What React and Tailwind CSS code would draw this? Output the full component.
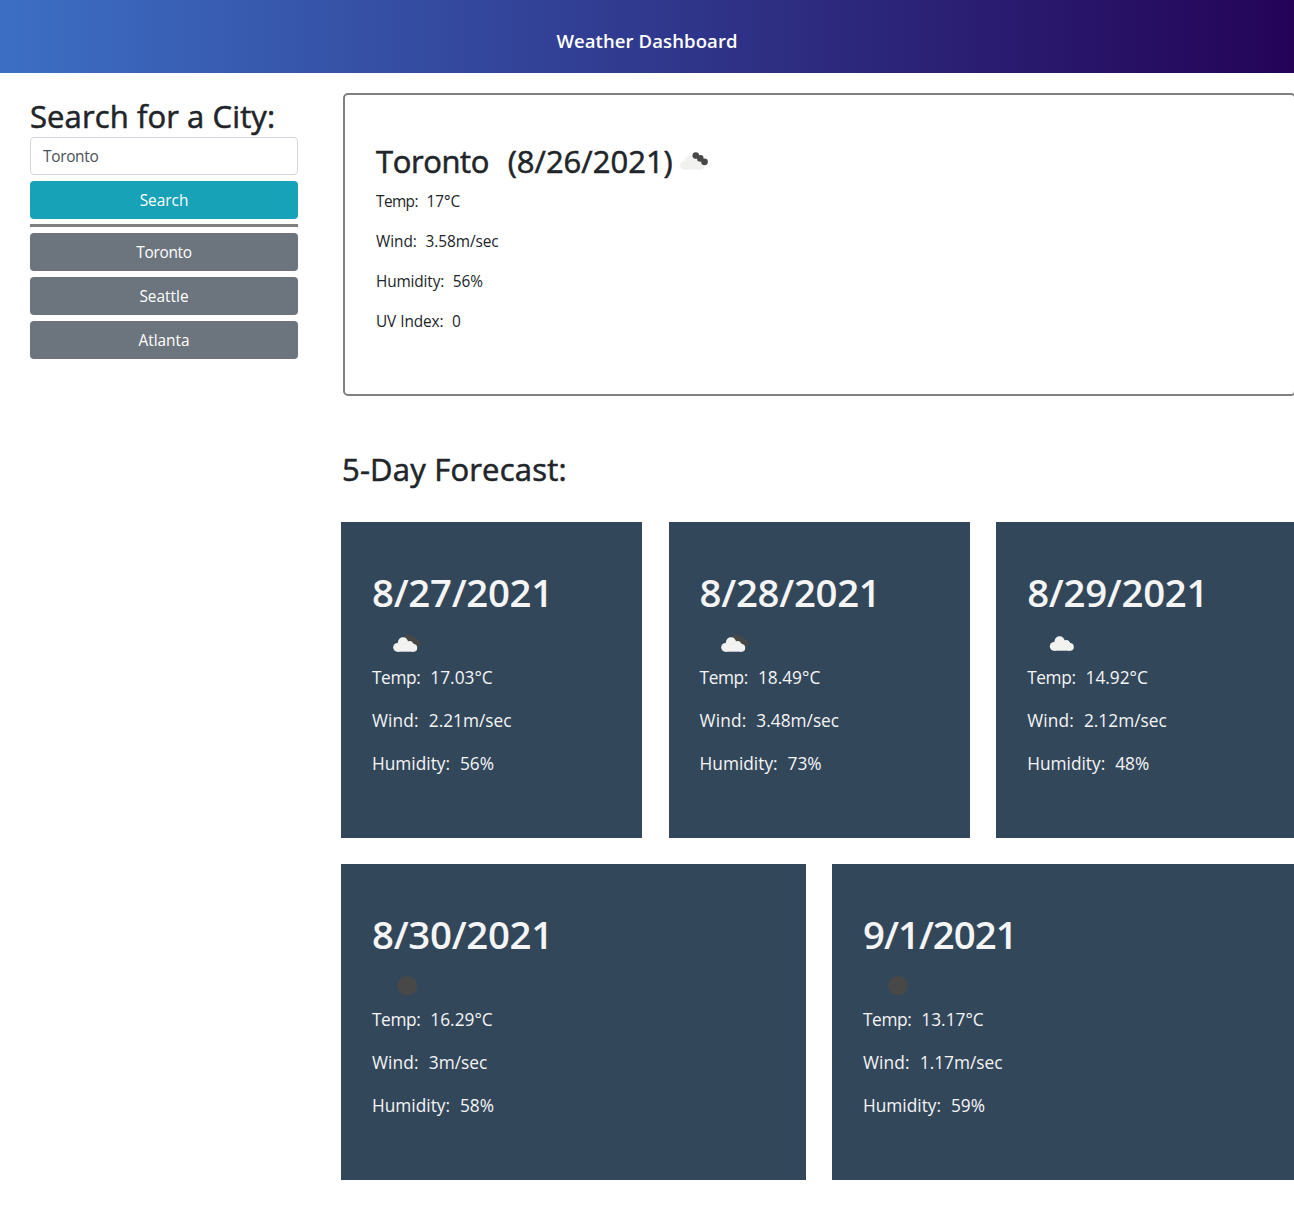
function CloudShape({ fill, transform }) {
  return (
    <g fill={fill} transform={transform}>
      <circle cx="4.6" cy="13.3" r="4.4" />
      <circle cx="10" cy="8.3" r="5.1" />
      <circle cx="16.4" cy="10.8" r="3.9" />
      <circle cx="20.4" cy="13.9" r="3.8" />
      <rect x="4.6" y="9" width="15.8" height="8.7" />
    </g>
  )
}

function BrokenClouds() {
  return (
    <svg width="30" height="20" viewBox="0 0 30 20" className="block">
      <g fill="#484848">
        <circle cx="15" cy="3.7" r="3.4" />
        <circle cx="19.6" cy="6.4" r="3.8" />
        <circle cx="23.6" cy="9.4" r="3.7" />
      </g>
      <CloudShape fill="#f2f2f1" />
    </svg>
  )
}

function FewClouds() {
  return (
    <svg width="30" height="20" viewBox="0 0 30 20" className="block">
      <CloudShape fill="#f1f1f0" transform="translate(0 1)" />
      <g fill="#484848">
        <circle cx="15.8" cy="4.6" r="3.3" />
        <circle cx="20.3" cy="7.4" r="3.3" />
        <circle cx="24.5" cy="10.8" r="3.4" />
      </g>
    </svg>
  )
}

function Cloud() {
  return (
    <svg width="30" height="20" viewBox="0 0 30 20" className="block">
      <CloudShape fill="#f2f2f1" transform="translate(1.6 -1)" />
    </svg>
  )
}

function Moon() {
  return (
    <svg width="30" height="20" viewBox="0 0 30 20" className="block">
      <circle cx="14.2" cy="9.8" r="9.8" fill="#484848" />
    </svg>
  )
}

const days = [
  { date: '8/27/2021', Icon: BrokenClouds, temp: '17.03°C', wind: '2.21m/sec', humidity: '56%' },
  { date: '8/28/2021', Icon: BrokenClouds, temp: '18.49°C', wind: '3.48m/sec', humidity: '73%' },
  { date: '8/29/2021', Icon: Cloud, temp: '14.92°C', wind: '2.12m/sec', humidity: '48%' },
  { date: '8/30/2021', Icon: Moon, temp: '16.29°C', wind: '3m/sec', humidity: '58%' },
  { date: '9/1/2021', Icon: Moon, temp: '13.17°C', wind: '1.17m/sec', humidity: '59%' },
]

function DayCard({ day, className, dateClassName = 'tracking-[-0.3px]' }) {
  const { Icon } = day
  return (
    <article className={`h-[316px] shrink-0 bg-[#33475b] pt-[46px] pl-[31px] text-[#f5f5f5] ${className}`}>
      <h3 className={`text-[38.4px] leading-[48px] font-semibold ${dateClassName}`}>{day.date}</h3>
      <div className="mt-[18px] ml-[21px] h-[22px]">
        <Icon />
      </div>
      <div className="text-[17.3px] leading-[43px] whitespace-pre [word-spacing:0.5px]">
        <p>
          <span className="tracking-[-0.4px]">Temp:</span>  {day.temp}
        </p>
        <p>
          <span className="tracking-[0.15px]">Wind:</span>  {day.wind}
        </p>
        <p>Humidity:  {day.humidity}</p>
      </div>
    </article>
  )
}

function CityButton({ children, className = 'bg-[#6c757d]' }) {
  return (
    <button className={`block h-[38px] w-full rounded-[4px] pt-px text-[15.4px] leading-[37px] text-white ${className}`}>
      {children}
    </button>
  )
}

export default function App() {
  return (
    <div className="h-[1211px] w-full overflow-hidden bg-white font-['Open_Sans',sans-serif] text-[#212529]">
      <header className="flex h-[73px] items-center justify-center bg-[linear-gradient(to_right,#3c6fc4,#240357)] pt-[9px]">
        <h1 className="text-[18.5px] font-semibold tracking-[0.1px] text-white">Weather Dashboard</h1>
      </header>
      <div className="flex items-start">
        <aside className="ml-[30px] w-[268px] shrink-0 pt-[24px]">
          <h2 className="mb-px text-[31px] leading-[39px] tracking-[0.1px] whitespace-nowrap [-webkit-text-stroke:0.55px]">
            Search for a City:
          </h2>
          <input
            className="block h-[38px] w-full rounded-[4px] border border-[#ced4da] px-[12px] text-[15.4px] tracking-[-0.3px] text-[#495057]"
            defaultValue="Toronto"
          />
          <div className="mt-[6px]">
            <CityButton className="bg-[#17a2b8]">Search</CityButton>
          </div>
          <div className="mt-[5px] mb-[6px] h-[3px] bg-[#808080]" />
          <div className="flex flex-col gap-[6px]">
            <CityButton>
              <span className="tracking-[-0.3px]">Toronto</span>
            </CityButton>
            <CityButton>Seattle</CityButton>
            <CityButton>Atlanta</CityButton>
          </div>
        </aside>
        <main className="ml-[43px] w-[953px] shrink-0 pt-[20px]">
          <section className="ml-[2px] h-[303px] w-[953px] rounded-[5px] border-2 border-[#808080] pt-[46px] pl-[31px]">
            <div className="mb-px flex items-center">
              <h2 className="text-[31px] leading-[40px] whitespace-pre [word-spacing:1.3px] [-webkit-text-stroke:0.55px]">
                <span className="tracking-[-0.4px]">Toronto</span>  (8/26/2021)
              </h2>
              <div className="ml-[7px]">
                <FewClouds />
              </div>
            </div>
            <div className="text-[15.4px] leading-[40px] tracking-[-0.05px] whitespace-pre [word-spacing:0.4px]">
              <p>
                <span className="tracking-[-0.6px]">Temp:</span>  17°C
              </p>
              <p>Wind:  3.58m/sec</p>
              <p>
                <span className="tracking-[-0.15px]">Humidity:</span>  56%
              </p>
              <p>
                <span className="tracking-[-0.15px]">UV Index:</span>  0
              </p>
            </div>
          </section>
          <h2 className="mt-[53px] ml-px text-[31px] leading-[40px] tracking-[0.2px] [-webkit-text-stroke:0.55px]">
            5-Day Forecast:
          </h2>
          <div className="mt-[33px] flex gap-[26.6px]">
            <DayCard day={days[0]} className="w-[301px]" />
            <DayCard day={days[1]} className="w-[301px]" />
            <DayCard day={days[2]} className="w-[301px]" />
          </div>
          <div className="mt-[26px] flex gap-[26px]">
            <DayCard day={days[3]} className="w-[465px]" />
            <DayCard day={days[4]} className="w-[465px]" dateClassName="tracking-[-1px]" />
          </div>
        </main>
      </div>
    </div>
  )
}
